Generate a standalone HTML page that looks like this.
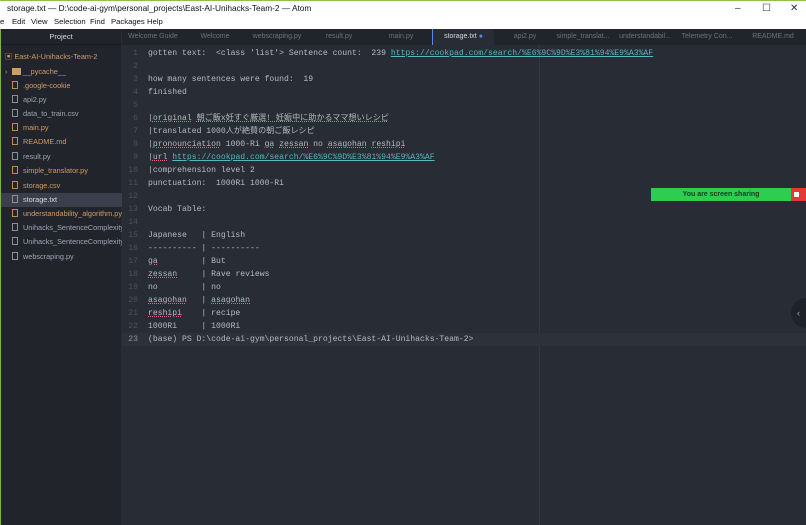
<!DOCTYPE html>
<html><head><meta charset="utf-8"><style>
*{margin:0;padding:0;box-sizing:border-box}
body{width:806px;height:525px;overflow:hidden;background:#282c34;font-family:"Liberation Sans","Noto Sans CJK JP",sans-serif;position:relative}
#title{position:absolute;left:0;top:0;width:806px;height:15px;background:#fff;border-top:1px solid #8bc34a;font-size:8.3px;color:#111;line-height:14px;padding-left:7px}
#menu{position:absolute;left:0;top:15px;width:806px;height:14px;background:#fff;font-size:7.7px;color:#111;line-height:14px}
#menu span{position:absolute}
.ctl{position:absolute;top:1px;font-size:10px;color:#333}
#side{position:absolute;left:0;top:29px;width:121px;height:496px;background:#21252b;border-left:1px solid #7cb342}
#side .h{height:16px;line-height:16px;text-align:center;font-size:7.5px;color:#d7dae0;border-bottom:1px solid #181a1f}
.f{position:absolute;left:0;width:121px;height:14px;font-size:7.3px;line-height:14px;color:#9da5b4;white-space:nowrap;overflow:hidden}
.f i{display:inline-block;width:6px;height:8px;border:1px solid #8a8f99;vertical-align:-1px;margin-right:5px;margin-left:11px}
.f.y{color:#d19a66}.f.y i{border-color:#c08a55}
.f.sel{background:#3a3f4b;color:#d7dae0}
#tabs{position:absolute;left:122px;top:29px;width:684px;height:16px;background:#21252b}
.t{position:absolute;top:0;height:16px;width:62px;font-size:7px;line-height:16px;text-align:center;color:#6b717d;white-space:nowrap;overflow:hidden}
.t.a{background:#282c34;color:#d7dae0;border-left:1px solid #568af2}
#ed{position:absolute;left:122px;top:45px;width:684px;height:480px}
.ln{position:absolute;left:0;width:16px;text-align:right;font:8.1px/13px "Liberation Mono",monospace;color:#495162}
.tx{position:absolute;left:26px;font:8.1px/13px "Liberation Mono","Noto Sans CJK JP",monospace;color:#b4bac6;white-space:pre}
.u{color:#56b6c2;text-decoration:underline}
.s{text-decoration:underline dotted;text-decoration-color:#e06c75}
#wrap{position:absolute;left:539px;top:45px;width:1px;height:480px;background:#333842}
</style></head><body>
<div id="title">storage.txt — D:\code-ai-gym\personal_projects\East-AI-Unihacks-Team-2 — Atom
<span class="ctl" style="left:735px">–</span><span class="ctl" style="left:762px">☐</span><span class="ctl" style="left:790px">✕</span></div>
<div id="menu"><span style="left:0">e</span><span style="left:12px">Edit</span><span style="left:31px">View</span><span style="left:54px">Selection</span><span style="left:90px">Find</span><span style="left:111px">Packages</span><span style="left:147px">Help</span></div>
<div id="side"><div class="h">Project</div>
<div class="f y" style="top:21px;padding-left:4px">▣ East-AI-Unihacks-Team-2</div>
<div class="f y" style="top:36px;padding-left:4px">›&nbsp; <span style="display:inline-block;width:9px;height:7px;background:#c9a060;vertical-align:-1px"></span> __pycache__</div>
<div class="f y" style="top:50px"><i></i>.google-cookie</div>
<div class="f" style="top:64px"><i></i>api2.py</div>
<div class="f" style="top:78px"><i></i>data_to_train.csv</div>
<div class="f y" style="top:92px"><i></i>main.py</div>
<div class="f y" style="top:106px"><i></i>README.md</div>
<div class="f" style="top:121px"><i></i>result.py</div>
<div class="f y" style="top:135px"><i></i>simple_translator.py</div>
<div class="f y" style="top:150px"><i></i>storage.csv</div>
<div class="f sel" style="top:164px"><i></i>storage.txt</div>
<div class="f y" style="top:178px"><i></i>understandability_algorithm.py</div>
<div class="f" style="top:192px"><i></i>Unihacks_SentenceComplexity</div>
<div class="f" style="top:206px"><i></i>Unihacks_SentenceComplexity</div>
<div class="f" style="top:221px"><i></i>webscraping.py</div>
</div>
<div id="tabs">
<div class="t" style="left:0">Welcome Guide</div><div class="t" style="left:62px">Welcome</div><div class="t" style="left:124px">webscraping.py</div><div class="t" style="left:186px">result.py</div><div class="t" style="left:248px">main.py</div><div class="t a" style="left:310px">storage.txt <span style="color:#568af2">●</span></div><div class="t" style="left:372px">api2.py</div><div class="t" style="left:430px">simple_translat...</div><div class="t" style="left:492px">understandabil...</div><div class="t" style="left:554px">Telemetry Con...</div><div class="t" style="left:620px">README.md</div>
</div>
<div id="wrap"></div>
<div id="ed">
<div style="position:absolute;left:0;top:288px;width:684px;height:13px;background:#2c313a"></div>
<div class="ln" style="top:2px">1<br>2<br>3<br>4<br>5<br>6<br>7<br>8<br>9<br>10<br>11<br>12<br>13<br>14<br>15<br>16<br>17<br>18<br>19<br>20<br>21<br>22<br><span style="color:#8a92a0">23</span></div>
<div class="tx" style="top:2px">gotten text:  &lt;class 'list'&gt; Sentence count:  239 <span class="u">https://cookpad.com/search/%E6%9C%9D%E3%81%94%E9%A3%AF</span>

how many sentences were found:  19
finished

|<span class="s">original</span> <span class="s">朝ご飯x妊すぐ厳選! 妊娠中に助かるママ想いレシピ</span>
|translated 1000人が絶賛の朝ご飯レシピ
|<span class="s">pronounciation</span> 1000-Ri <span class="s">ga</span> <span class="s">zessan</span> no <span class="s">asagohan</span> <span class="s">reshipi</span>
|<span class="s">url</span> <span class="u">https://cookpad.com/search/%E6%9C%9D%E3%81%94%E9%A3%AF</span>
|comprehension level 2
punctuation:  1000Ri 1000-Ri

Vocab Table:

Japanese   | English
---------- | ----------
<span class="s">ga</span>         | But
<span class="s">zessan</span>     | Rave reviews
no         | no
<span class="s">asagohan</span>   | <span class="s">asagohan</span>
<span class="s">reshipi</span>    | recipe
1000Ri     | 1000Ri
(base) PS D:\code-ai-gym\personal_projects\East-AI-Unihacks-Team-2&gt;</div>
</div>
<div style="position:absolute;left:651px;top:188px;width:140px;height:13px;background:#2ecc51;font-size:7px;line-height:13px;color:#14401c;font-weight:bold;text-align:center">You are screen sharing</div>
<div style="position:absolute;left:791px;top:188px;width:15px;height:13px;background:#e53935"><div style="width:5px;height:5px;background:#fff;margin:4px 0 0 3px"></div></div>
<div style="position:absolute;left:791px;top:298px;width:30px;height:30px;border-radius:50%;background:#1f2228;color:#aaa;font-size:9px;line-height:30px;padding-left:6px">‹</div>
</body></html>
